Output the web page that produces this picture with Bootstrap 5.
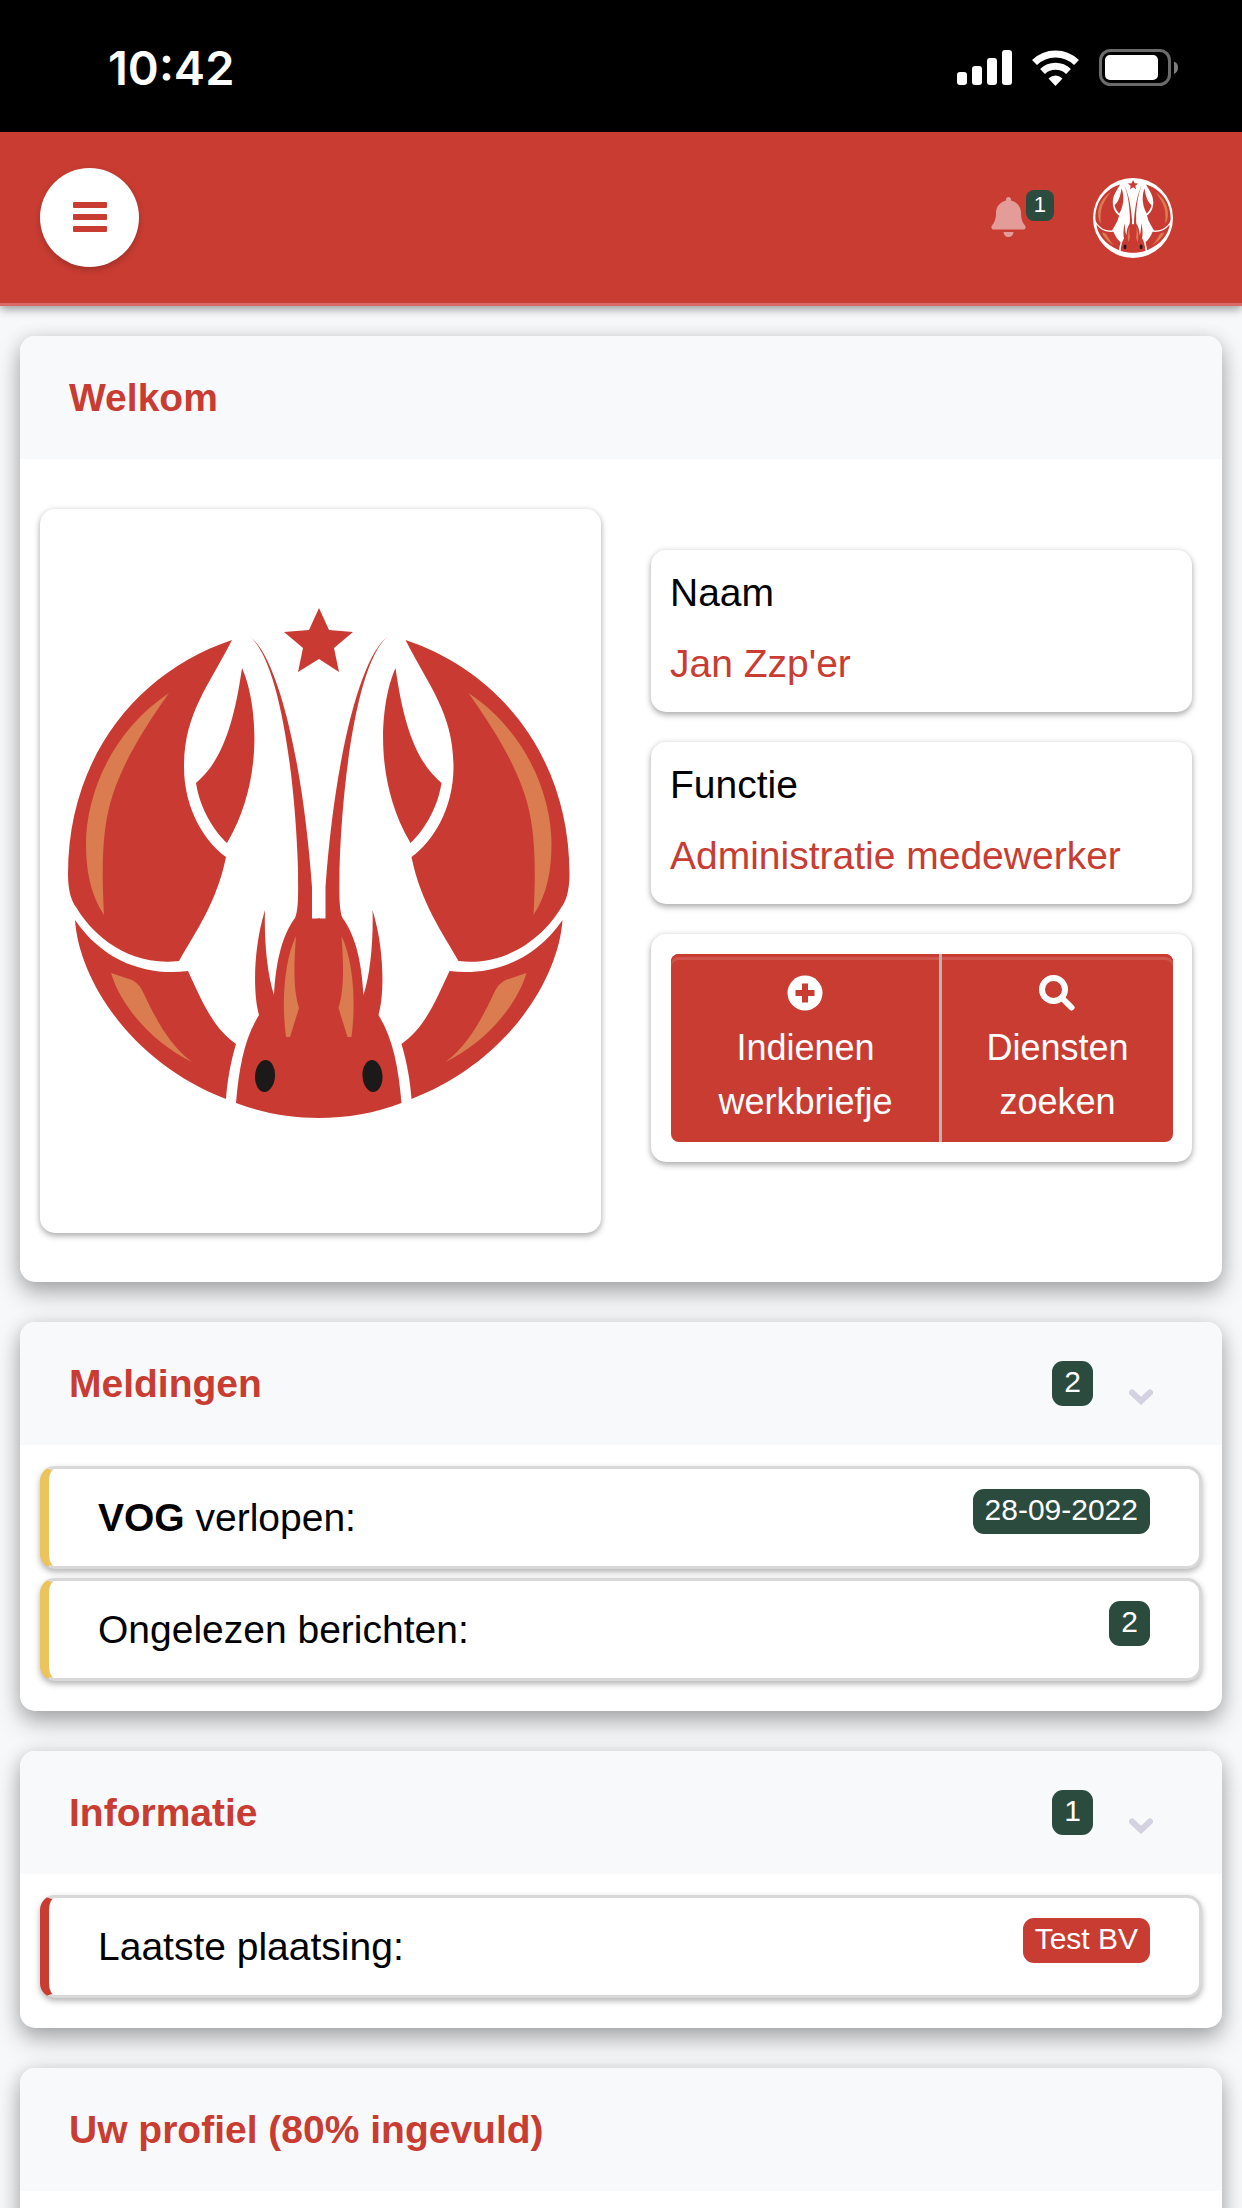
<!DOCTYPE html>
<html lang="nl">
<head>
<meta charset="utf-8">
<meta name="viewport" content="width=device-width, initial-scale=1">
<title>Welkom</title>
<link rel="stylesheet" href="https://cdn.jsdelivr.net/npm/bootstrap@5.3.0/dist/css/bootstrap.min.css">
<style>
:root { --brand: #c83c32; --forest: #2b4b3f; --amber: #ebc55b; --haze: #f8f9fb; }
body { font-family: "Liberation Sans", Arial, sans-serif; font-size: 39px; line-height: 44px; color: #000; background: #f7f8fa; }
svg { display: block; flex: none; }
.statusbar { height: 132px; padding: 4px 64px 0 108px; background: #000; color: #fff; font: 600 47px/56px Inter, sans-serif; }
.statusbar .signals { gap: 20px; }
.topbar { height: 174px; padding: 0 69px 0 40px; background: var(--brand); border-bottom: 3px solid #da6a66; box-shadow: 0 3px 9px rgba(0,0,0,.4); }
.menu-btn { width: 99px; height: 99px; padding: 0 0 2px; border: 0; border-radius: 50%; background: #fff; color: var(--brand); box-shadow: 0 3px 6px rgba(0,0,0,.2); }
.topbar-tools { gap: 39px; }
.bell-btn { border: 0; padding: 0 0 2px; background: none; color: #e39c98; }
.bell-count { margin-bottom: 22px; }
.badge.tag { font-size: 30px; line-height: 33px; font-weight: 400; padding: 4px 12px 8px; border-radius: 11px; background: var(--forest); color: #fff; }
.badge.tag-sm { font-size: 22px; line-height: 21px; padding: 4px 8px 6px; border-radius: 8px; }
.badge.tag-brand { background: var(--brand); }
.avatar { width: 80px; height: 80px; background: #fff; }
.tiles { padding: 30px 20px 0; gap: 40px; }
.panel { border: 0; border-radius: 15px; background: #fff; color: #000; box-shadow: 0 12px 24px rgba(0,0,0,.25), 0 3px 18px rgba(0,0,0,.16); }
.panel-head { height: 123px; padding: 0 69px 0 49px; border: 0; background: var(--haze); border-radius: 15px 15px 0 0 !important; }
.panel-head h2 { margin: 0; font-size: 39px; line-height: 44px; font-weight: 700; color: var(--brand); }
.panel-tools { gap: 36px; }
.chev { color: #d4d1e0; margin-top: 27px; border: 0; padding: 0; background: none; }
.welcome { padding: 50px 30px 49px 20px; gap: 50px; }
.box { border-radius: 15px; background: #fff; box-shadow: 0 3px 6px rgba(0,0,0,.3), 0 0 6px rgba(0,0,0,.08); }
.photo { flex: 561 1 0; }
.photo svg { width: 100%; height: auto; }
.facts { flex: 541 1 0; gap: 30px; padding-top: 41px; }
.fact { padding: 21px 19px 0; }
.fact dt { font-weight: 400; margin-bottom: 27px; }
.fact dd { margin-bottom: 26px; color: var(--brand); }
.actions { padding: 20px 19px 20px 20px; }
.btn-act { --bs-btn-color: #fff; --bs-btn-bg: var(--brand); --bs-btn-hover-bg: #b3352c; --bs-btn-hover-color: #fff; font-size: 36px; line-height: 54px; padding: 13px 44px; border: 0; border-radius: 8px; box-shadow: inset 0 3px 0 var(--brand), inset 0 6px 0 #d0564d; }
.btn-act:first-child { padding-left: 47px; padding-right: 47px; }
.btn-group > .btn-act + .btn-act { margin-left: 0; border-left: 3px solid #b5b5b5; }
.btn-act svg { margin: 8px auto 10px; }
.rows { padding: 21px 20px 30px; gap: 9px; }
.row-item { min-height: 103px; padding: 0 49px; border: 3px solid #d8d8d8; border-left: 9px solid var(--amber); border-radius: 15px; background: #fff; box-shadow: 0 3px 6px rgba(0,0,0,.3); }
.row-item.is-brand { border-left-color: var(--brand); }
.row-item .tag { align-self: flex-start; margin-top: 20px; }
</style>
<script src="https://cdn.jsdelivr.net/npm/bootstrap@5.3.0/dist/js/bootstrap.bundle.min.js" defer></script>
</head>
<body class="vh-100 overflow-hidden">

<svg width="0" height="0" class="position-absolute" aria-hidden="true">
  <defs>
    <g id="half">
      <g fill="#c93b32">
        <path d="M192 131C96 163 28 250 28 365C28 383 32 393 36 398C50 422 85 458 139 452C155 424 177 393 186 348C165 333 144 300 144 258C144 205 168 178 192 131Z"/>
        <path d="M202 159C216 190 226 268 187 334C174 322 160 300 156 274C182 252 194 215 202 159Z"/>
        <path d="M35 411C39 470 90 553 186 590C187 575 190 555 196 535C172 518 161 490 148 462C110 467 65 455 35 411Z"/>
        <path d="M210 128C235 145 262 240 272 378V409.500H280V609C250 609 222 604 196 594C199 560 204 530 219 506C213 485 213 440 225 401C224 430 227 465 234 486C236 450 243 425 255 409C259 400 258 380 258 360C255 260 238 150 210 128Z"/>
      </g>
      <g fill="#da7b50">
        <path d="M129 184C72 222 46 285 46 335C46 360 50 385 64 406C61 350 63 315 73 285C83 255 100 225 129 184Z"/>
        <path d="M71 464L92 471Q99 475 102 481C115 508 128 535 152 553C115 535 82 500 71 464Z"/>
        <path d="M256 427C245 450 241 490 246 528H250L259 499C253 480 254 455 256 427Z"/>
      </g>
      <ellipse cx="225" cy="567" rx="10" ry="16" fill="#1c1a19" transform="rotate(4 225 567)"/>
    </g>
    <g id="lobster">
      <use href="#half"/>
      <use href="#half" transform="translate(557.500 0) scale(-1 1)"/>
      <path fill="#c93b32" d="M279 99L289 121L313 123L294 139L299 163L279 150L258 163L263 139L244 123L269 121Z"/>
    </g>
  </defs>
</svg>

<div class="statusbar d-flex align-items-center justify-content-between">
  <time>10:42</time>
  <div class="signals d-flex align-items-center">
    <svg width="55" height="36" viewBox="0 0 55 36" fill="#fff" aria-hidden="true"><rect y="22" width="10" height="13" rx="3"/><rect x="15" y="16" width="10" height="19" rx="3"/><rect x="30" y="8" width="10" height="27" rx="3"/><rect x="45" width="10" height="35" rx="3"/></svg>
    <svg width="47" height="36" viewBox="0 0 47 36" fill="none" stroke="#fff" stroke-width="7" aria-hidden="true"><path d="M2.500 12.500A30 30 0 0 1 44.500 12.500"/><path d="M10.500 21.500A19 19 0 0 1 36.500 21.500"/><path d="M23.500 36L16.500 28.500Q23.500 22.500 30.500 28.500Z" fill="#fff" stroke="none"/></svg>
    <svg width="79" height="38" viewBox="0 0 79 38" aria-hidden="true"><rect x="1.500" y="1.500" width="69" height="34" rx="10" fill="none" stroke="#6b6b6b" stroke-width="3"/><rect x="6" y="6" width="53" height="25" rx="5" fill="#fff"/><path d="M75 12.500Q79 14 79 18.500T75 25Z" fill="#7d7d7d"/></svg>
  </div>
</div>

<header class="topbar position-relative d-flex align-items-center justify-content-between">
  <button type="button" class="menu-btn d-flex align-items-center justify-content-center" aria-label="Menu">
    <svg width="34" height="30" viewBox="0 0 34 30" fill="currentColor"><rect width="34" height="6" rx="1"/><rect y="12" width="34" height="6" rx="1"/><rect y="24" width="34" height="6" rx="1"/></svg>
  </button>
  <div class="topbar-tools d-flex align-items-center">
    <button type="button" class="bell-btn d-flex align-items-center" aria-label="Berichten">
      <svg width="35" height="40" viewBox="0 0 35 40" fill="currentColor"><path d="M15 3.500V2.500Q15 0 17.500 0T20 2.500V3.500C26 5 30 9.500 30 16C30 23 32 26 34 28.500Q35 30 34.500 31Q34 32.500 32.500 32.500H2.500Q1 32.500 .5 31Q0 30 1 28.500C3 26 5 23 5 16C5 9.500 9 5 15 3.500Z"/><path d="M12.500 35H22.500Q22 40 17.500 40T12.500 35Z"/></svg>
      <span class="badge tag tag-sm bell-count">1</span>
    </button>
    <a href="#" class="avatar rounded-circle d-block" aria-label="Profiel">
      <svg width="80" height="80" viewBox="12 85 533 560" preserveAspectRatio="none"><use href="#lobster"/></svg>
    </a>
  </div>
</header>

<main class="tiles d-flex flex-column">
  <section class="card panel">
    <div class="card-header panel-head d-flex align-items-center"><h2>Welkom</h2></div>
    <div class="welcome d-flex align-items-start">
      <div class="box photo">
        <svg viewBox="0 0 561 724" role="img" aria-label="Logo"><use href="#lobster"/></svg>
      </div>
      <div class="facts d-flex flex-column">
        <dl class="box fact mb-0"><dt>Naam</dt><dd>Jan Zzp'er</dd></dl>
        <dl class="box fact mb-0"><dt>Functie</dt><dd>Administratie medewerker</dd></dl>
        <div class="box actions">
          <div class="btn-group w-100">
            <button type="button" class="btn btn-act flex-grow-1">
              <svg width="36" height="36" viewBox="0 0 36 36"><circle cx="18" cy="18" r="17.500" fill="#fff"/><path d="M18 8.500V27.500M8.500 18H27.500" stroke="#c83c32" stroke-width="6"/></svg>
              Indienen<br>werkbriefje
            </button>
            <button type="button" class="btn btn-act flex-grow-1">
              <svg width="36" height="36" viewBox="0 0 36 36" fill="none" stroke="#fff" stroke-width="6"><circle cx="14.500" cy="14.500" r="11.500"/><path d="M24 24L32.500 32.500" stroke-width="6" stroke-linecap="round"/></svg>
              Diensten<br>zoeken
            </button>
          </div>
        </div>
      </div>
    </div>
  </section>

  <section class="card panel">
    <div class="card-header panel-head d-flex align-items-center justify-content-between">
      <h2>Meldingen</h2>
      <div class="panel-tools d-flex align-items-center">
        <span class="badge tag">2</span>
        <button type="button" class="chev" aria-label="Inklappen"><svg width="24" height="16" viewBox="0 0 24 16" fill="none" stroke="currentColor" stroke-width="6" stroke-linecap="round"><path d="M3 3.500L12 12L21 3.500"/></svg></button>
      </div>
    </div>
    <div class="rows d-flex flex-column">
      <div class="row-item d-flex align-items-center justify-content-between"><span><b>VOG</b> verlopen:</span><span class="badge tag">28-09-2022</span></div>
      <div class="row-item d-flex align-items-center justify-content-between"><span>Ongelezen berichten:</span><span class="badge tag">2</span></div>
    </div>
  </section>

  <section class="card panel">
    <div class="card-header panel-head d-flex align-items-center justify-content-between">
      <h2>Informatie</h2>
      <div class="panel-tools d-flex align-items-center">
        <span class="badge tag">1</span>
        <button type="button" class="chev" aria-label="Inklappen"><svg width="24" height="16" viewBox="0 0 24 16" fill="none" stroke="currentColor" stroke-width="6" stroke-linecap="round"><path d="M3 3.500L12 12L21 3.500"/></svg></button>
      </div>
    </div>
    <div class="rows d-flex flex-column">
      <div class="row-item is-brand d-flex align-items-center justify-content-between"><span>Laatste plaatsing:</span><span class="badge tag tag-brand">Test BV</span></div>
    </div>
  </section>

  <section class="card panel">
    <div class="card-header panel-head d-flex align-items-center"><h2>Uw profiel (80% ingevuld)</h2></div>
    <div class="rows"></div>
  </section>
</main>
</body>
</html>
